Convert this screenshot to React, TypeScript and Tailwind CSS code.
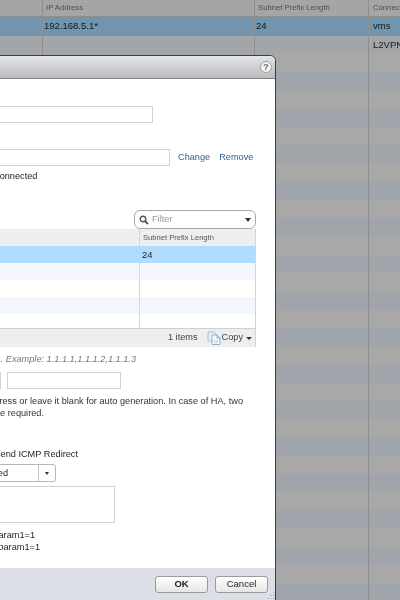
const stripeRows = Array.from({ length: 30 }, (_, i) => i);

function GridRow({ bg, c1, c2, c3, h = "h-[18.25px]", textClass = "text-[9.5px] text-[#14171a]", pad = "pl-[1px]" }: { bg: string; c1?: string; c2?: string; c3?: string; h?: string; textClass?: string; pad?: string }) {
  return (
    <div className={`flex ${bg} ${h} ${textClass}`}>
      <div className="w-[43px] shrink-0 border-r border-[#8e8e8e]"></div>
      <div className={`w-[212px] shrink-0 border-r border-[#8e8e8e] flex items-center ${pad}`}>{c1}</div>
      <div className={`w-[114px] shrink-0 border-r border-[#8e8e8e] flex items-center ${pad}`}>{c2}</div>
      <div className="flex-1 pl-[4px] flex items-center whitespace-nowrap overflow-hidden">{c3}</div>
    </div>
  );
}

function Input({ className }: { className: string }) {
  return <div className={`border border-[#d2d2d2] bg-white ${className}`}></div>;
}

function CopyIcon() {
  return (
    <svg width="14" height="14" viewBox="0 0 14 14" className="shrink-0">
      <path d="M1 1h6l2 2v7H1z" fill="#e6eef7" stroke="#9db4cc" strokeWidth="0.8" />
      <path d="M5 4h5l3 3v6.5H5z" fill="#f6f9fc" stroke="#7f9dbb" strokeWidth="0.8" />
      <path d="M10 4v3h3" fill="none" stroke="#7f9dbb" strokeWidth="0.8" />
      <path d="M7 10h4M7 11.7h4" stroke="#a9bdd1" strokeWidth="0.7" />
    </svg>
  );
}

function TableRow({ bg, h = "h-[17px]" }: { bg: string; h?: string }) {
  return (
    <div className={`flex ${h} ${bg}`}>
      <div className="w-[340px] border-r border-[#d9d9d9]"></div>
    </div>
  );
}

export default function App() {
  return (
    <div className="relative w-[400px] h-[600px] overflow-hidden bg-[#a9a9a9] font-['Liberation_Sans',Arial,sans-serif] blur-[0.3px]">
      {/* backdrop grid */}
      <GridRow
        bg="bg-[#a5a5a5]"
        h="h-[17px]"
        c1="IP Address"
        c2="Subnet Prefix Length"
        c3="Connection Status"
        pad="pl-[3px]"
        textClass="text-[7.7px] text-[#4e4e4e] border-b border-[#8e8e8e]"
      />
      <GridRow bg="bg-[#7295ae]" h="h-[19px]" c1="192.168.5.1*" c2="24" c3="vms" />
      <GridRow bg="bg-[#a2a6a8]" h="h-[18px]" c3="L2VPN" />
      {stripeRows.map((i) => (
        <GridRow key={i} bg={i % 2 === 0 ? "bg-[#a9a8a8]" : "bg-[#9fa5aa]"} />
      ))}

      {/* modal dialog, its left part runs off the page */}
      <div className="absolute left-[-301px] top-[55px] w-[577px] h-[560px] flex flex-col bg-white border border-[#3a3d40] rounded-t-[6px] text-[9.2px] text-[#333]">
        <div className="h-[23px] shrink-0 flex items-center justify-end pr-[3px] bg-gradient-to-b from-[#e4e5e7] to-[#b9bbbe] border-b border-[#7d7f80] rounded-t-[6px]">
          <div className="w-[12px] h-[12px] rounded-full bg-[#f4f4f4] border border-[#9c9c9c] flex items-center justify-center text-[9px] font-bold text-[#666] leading-none">
            ?
          </div>
        </div>

        <div className="flex-1 flex flex-col">
          <Input className="ml-[100px] mt-[27px] w-[353px] h-[17px]" />

          <div className="flex items-center mt-[26px] h-[17px]">
            <Input className="ml-[100px] w-[370px] h-[17px]" />
            <a className="ml-[8px] text-[#33628f]">Change</a>
            <a className="ml-[9px] text-[#33628f]">Remove</a>
          </div>
          <div className="mt-[4px] h-[12px] leading-[12px] ml-[293px] text-[#222]">Connected</div>

          {/* filter box */}
          <div className="mt-[28px] ml-[434px] w-[122px] h-[19px] border border-[#a8a8a8] rounded-[6px] flex items-center px-[4px] bg-white">
            <svg width="10" height="10" viewBox="0 0 10 10">
              <circle cx="4" cy="4" r="2.8" fill="none" stroke="#555" strokeWidth="1.4" />
              <path d="M6 6l3 3" stroke="#555" strokeWidth="1.8" />
            </svg>
            <span className="ml-[3px] text-[#999] flex-1">Filter</span>
            <div className="w-0 h-0 border-l-[3.5px] border-r-[3.5px] border-t-[4px] border-l-transparent border-r-transparent border-t-[#333]"></div>
          </div>

          {/* table */}
          <div className="ml-[100px] w-[456px] border-r border-[#d4d4d4]">
            <div className="flex h-[17px] bg-[#eceef0] text-[7.6px] text-[#555]">
              <div className="w-[340px] border-r border-[#d4d4d4]"></div>
              <div className="flex-1 pl-[3px] flex items-center whitespace-nowrap">Subnet Prefix Length</div>
            </div>
            <div className="flex h-[17px] bg-[#b0dcff] text-[9.5px] text-[#222] pt-[1px]">
              <div className="w-[340px] border-r border-[#d4d4d4]"></div>
              <div className="flex-1 pl-[2px] flex items-center">24</div>
            </div>
            <TableRow bg="bg-[#f3f6fa]" />
            <TableRow bg="bg-white" />
            <TableRow bg="bg-[#f3f6fa]" />
            <TableRow bg="bg-white" h="h-[14px]" />
            <div className="h-[19px] bg-[#eceef0] border-t border-[#cfcfcf] flex items-center justify-end pr-[3px] text-[#444]">
              <span className="font-medium">1 items</span>
              <span className="ml-[9px]"><CopyIcon /></span>
              <span className="ml-[1px]">Copy</span>
              <div className="ml-[3px] w-0 h-0 border-l-[3px] border-r-[3px] border-t-[3px] border-l-transparent border-r-transparent border-t-[#333]"></div>
            </div>
          </div>

          <div className="mt-[6px] h-[12px] leading-[12px] text-[#777] italic w-[436px] whitespace-nowrap text-right">
            Comma separated IP addresses. Example: 1.1.1.1,1.1.1.2,1.1.1.3
          </div>

          <div className="flex mt-[7px]">
            <Input className="ml-[100px] w-[201px] h-[17px]" />
            <Input className="ml-[6px] w-[114px] h-[17px]" />
          </div>

          <div className="mt-[6px] leading-[12px] text-[#333]">
            <div className="text-right whitespace-nowrap w-[543px]">Enter the secondary IP address or leave it blank for auto generation. In case of HA, two</div>
            <div className="text-right whitespace-nowrap w-[344px]">management IPs are required.</div>
          </div>

          <div className="mt-[29px] h-[12px] leading-[12px] text-right w-[378px] whitespace-nowrap text-[#222]">Enable Proxy ARP  Send ICMP Redirect</div>

          <div className="mt-[4px] ml-[100px] w-[256px] h-[18px] border border-[#b5b5b5] rounded-[3px] flex bg-white">
            <div className="flex-1 text-right pr-[30px] leading-[16px] text-[#222]">Disabled</div>
            <div className="w-[17px] border-l border-[#c4c4c4] flex items-center justify-center">
              <div className="w-0 h-0 border-l-[2.5px] border-r-[2.5px] border-t-[3px] border-l-transparent border-r-transparent border-t-[#333]"></div>
            </div>
          </div>

          <Input className="mt-[4px] ml-[100px] w-[315px] h-[37px]" />

          <div className="mt-[6px] leading-[12px] text-[#222]">
            <div className="text-right w-[335px] whitespace-nowrap">e.g. param1=1</div>
            <div className="text-right w-[340px] whitespace-nowrap">e.g. param1=1</div>
          </div>
        </div>

        <div className="absolute left-0 right-0 top-[512px] h-[47px] bg-[#dce0e6] flex justify-end gap-[7px] pt-[8px] pr-[7px]">
          <button className="w-[53px] h-[17px] rounded-[3px] border border-[#9a9a9a] bg-gradient-to-b from-white to-[#e6e6e6] text-[9.5px] font-bold text-[#222] flex items-center justify-center">OK</button>
          <button className="w-[53px] h-[17px] rounded-[3px] border border-[#9a9a9a] bg-gradient-to-b from-white to-[#e6e6e6] text-[9.5px] text-[#222] flex items-center justify-center">Cancel</button>
        </div>
      </div>

      {/* resize grip */}
      <div className="absolute left-[266px] top-[591px]">
        <svg width="9" height="9" viewBox="0 0 9 9">
          <path d="M8 1v1M5 4v1M8 4v1M2 7v1M5 7v1M8 7v1" stroke="#8f8f8f" strokeWidth="1" />
        </svg>
      </div>
    </div>
  );
}
